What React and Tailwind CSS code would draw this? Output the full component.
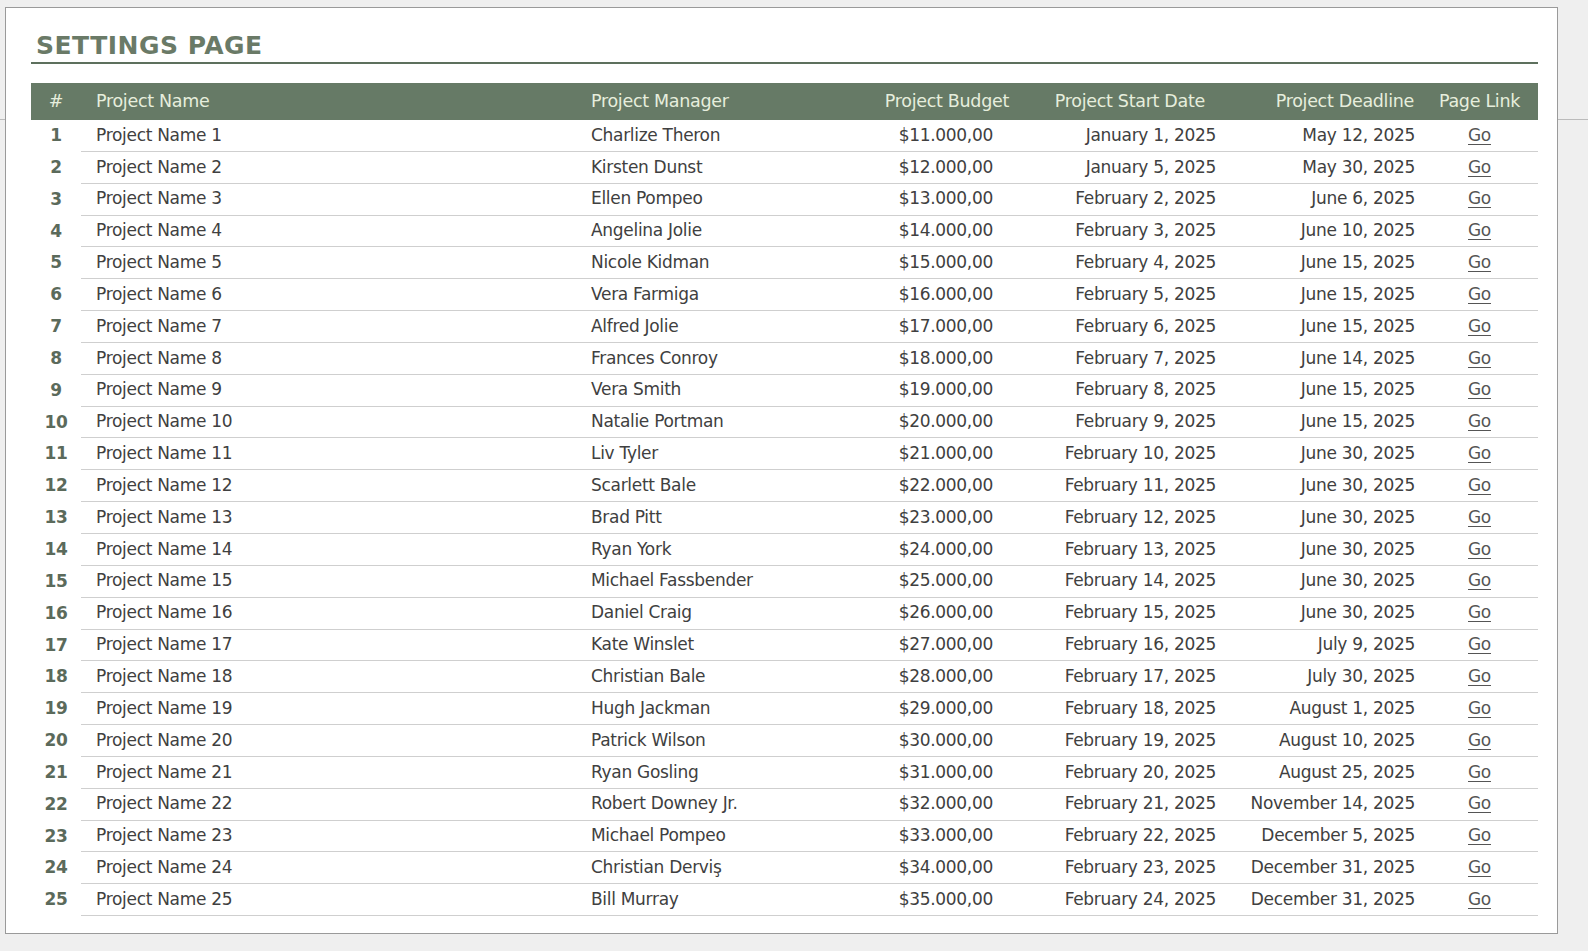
const rows = [
["Charlize Theron","January 1, 2025","May 12, 2025"],
["Kirsten Dunst","January 5, 2025","May 30, 2025"],
["Ellen Pompeo","February 2, 2025","June 6, 2025"],
["Angelina Jolie","February 3, 2025","June 10, 2025"],
["Nicole Kidman","February 4, 2025","June 15, 2025"],
["Vera Farmiga","February 5, 2025","June 15, 2025"],
["Alfred Jolie","February 6, 2025","June 15, 2025"],
["Frances Conroy","February 7, 2025","June 14, 2025"],
["Vera Smith","February 8, 2025","June 15, 2025"],
["Natalie Portman","February 9, 2025","June 15, 2025"],
["Liv Tyler","February 10, 2025","June 30, 2025"],
["Scarlett Bale","February 11, 2025","June 30, 2025"],
["Brad Pitt","February 12, 2025","June 30, 2025"],
["Ryan York","February 13, 2025","June 30, 2025"],
["Michael Fassbender","February 14, 2025","June 30, 2025"],
["Daniel Craig","February 15, 2025","June 30, 2025"],
["Kate Winslet","February 16, 2025","July 9, 2025"],
["Christian Bale","February 17, 2025","July 30, 2025"],
["Hugh Jackman","February 18, 2025","August 1, 2025"],
["Patrick Wilson","February 19, 2025","August 10, 2025"],
["Ryan Gosling","February 20, 2025","August 25, 2025"],
["Robert Downey Jr.","February 21, 2025","November 14, 2025"],
["Michael Pompeo","February 22, 2025","December 5, 2025"],
["Christian Derviş","February 23, 2025","December 31, 2025"],
["Bill Murray","February 24, 2025","December 31, 2025"],
];
const font = { fontFamily: '"DejaVu Sans", sans-serif' };
export default function App() {
  return (
    <div className="w-[1588px] h-[951px] bg-[#efefef] pt-[7px] pl-[5px] relative" style={font}>
      <div className="absolute left-0 top-[119px] w-[1588px] h-px bg-[#bbb]" />
      <div className="relative w-[1553px] h-[927px] bg-white border border-[#9a9a9a] pl-[25px] pt-[24px]">
        <div className="w-[1507px]">
          <div className="text-[25px] font-bold text-[#6a7a67] pl-[5px] leading-[28px] tracking-[0.5px]">SETTINGS PAGE</div>
          <div className="h-[2px] bg-[#5d705d] mt-[2px]" />
          <div className="mt-[19px] h-[37px] bg-[#667a66] flex items-center text-[17.5px] text-[#e6eedd] tracking-[-0.3px]">
            <div className="w-[50px] text-center">#</div>
            <div className="w-[495px] pl-[15px]">Project Name</div>
            <div className="w-[285px] pl-[15px]">Project Manager</div>
            <div className="w-[155px] text-right pr-[7px]">Project Budget</div>
            <div className="w-[207px] text-right pr-[18px]">Project Start Date</div>
            <div className="w-[198px] text-right pr-[7px]">Project Deadline</div>
            <div className="w-[117px] text-center">Page Link</div>
          </div>
          {rows.map((r, i) => (
            <div key={i} className="flex h-[31.85px] text-[17px] text-[#404040] tracking-[-0.3px]">
              <div className="w-[50px] text-center font-bold text-[#5b6a5b] leading-[31px]">{i + 1}</div>
              <div className="flex flex-1 items-center border-b border-[#cfcfcf]">
                <div className="w-[495px] pl-[15px]">Project Name {i + 1}</div>
                <div className="w-[285px] pl-[15px]">{r[0]}</div>
                <div className="w-[155px] text-right pr-[23px]">${(11 + i)}.000,00</div>
                <div className="w-[207px] text-right pr-[7px]">{r[1]}</div>
                <div className="w-[198px] text-right pr-[6px]">{r[2]}</div>
                <div className="w-[117px] text-center"><span className="underline underline-offset-[3px] text-[#555]">Go</span></div>
              </div>
            </div>
          ))}
        </div>
      </div>
    </div>
  );
}
